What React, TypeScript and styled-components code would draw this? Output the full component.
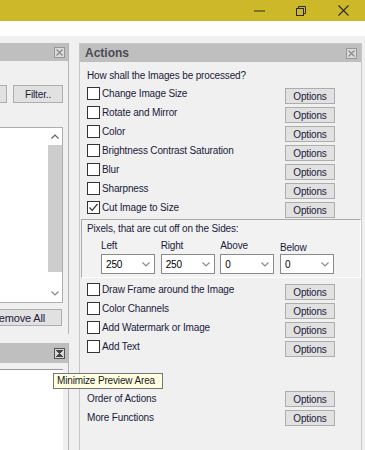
import React from 'react';
import styled, { createGlobalStyle } from 'styled-components';

const GlobalStyle = createGlobalStyle`
  html, body {
    margin: 0;
    padding: 0;
  }
  body {
    background: #f0f0f0;
    font-family: 'Liberation Sans', Arial, sans-serif;
    font-size: 10px;
    letter-spacing: -0.15px;
    color: #1a1b3a;
    overflow: hidden;
  }
`;

const Window = styled.div`
  position: relative;
  width: 365px;
  height: 450px;
  display: flex;
  flex-direction: column;
  overflow: hidden;
`;

const TitleBar = styled.div`
  height: 21px;
  flex-shrink: 0;
  display: flex;
  justify-content: flex-end;
  background: #cdb82a;
`;

const CaptionButton = styled.div<{ $w: number }>`
  width: ${({ $w }) => $w}px;
  height: 21px;
  display: flex;
  align-items: center;
  justify-content: center;
`;

const ToolStrip = styled.div`
  height: 15px;
  flex-shrink: 0;
  background: #ffffff;
`;

const Workspace = styled.div`
  flex: 1;
  display: flex;
  padding-top: 7px;
  min-height: 0;
`;

const LeftColumn = styled.div`
  width: 151px;
  margin-left: -82px;
  flex-shrink: 0;
  display: flex;
  flex-direction: column;
  gap: 9px;
`;

const DockPanel = styled.div<{ $height?: number }>`
  display: flex;
  flex-direction: column;
  border-right: 1px solid #b4b4b4;
  ${({ $height }) => ($height ? `height: ${$height}px;` : 'flex: 1;')}
  box-sizing: border-box;
`;

const PanelHeader = styled.div<{ $height: number; $padRight: number }>`
  height: ${({ $height }) => $height}px;
  flex-shrink: 0;
  display: flex;
  align-items: center;
  justify-content: space-between;
  padding: 0 ${({ $padRight }) => $padRight}px 0 5px;
  background: #bfbfbf;
`;

const PanelTitle = styled.span`
  font-size: 12px;
  font-weight: bold;
  letter-spacing: 0;
  color: #4b4b55;
`;

const LeftBody = styled.div`
  flex: 1;
  display: flex;
  flex-direction: column;
  align-items: flex-end;
  padding: 24px 5px 0 0;
`;

const ButtonRow = styled.div`
  display: flex;
  gap: 6px;
`;

const PushButton = styled.div<{ $w: number; $h?: number }>`
  width: ${({ $w }) => $w}px;
  height: ${({ $h }) => $h ?? 18}px;
  box-sizing: border-box;
  flex-shrink: 0;
  display: flex;
  align-items: center;
  justify-content: center;
  background: #e1e1e1;
  border: 1px solid #adadad;
  color: #1a1b3a;
  white-space: nowrap;
`;

const ListBox = styled.div`
  width: 140px;
  height: 176px;
  margin-top: 24px;
  box-sizing: border-box;
  display: flex;
  justify-content: flex-end;
  background: #ffffff;
  border: 1px solid #adadad;
`;

const ScrollBar = styled.div`
  width: 14px;
  display: flex;
  flex-direction: column;
  align-items: stretch;
`;

const ScrollArrow = styled.div`
  height: 17px;
  display: flex;
  align-items: center;
  justify-content: center;
`;

const ScrollThumb = styled.div`
  height: 127px;
  background: #cdcdcd;
`;

const ScrollTrack = styled.div`
  flex: 1;
`;

const RemoveButton = styled(PushButton)`
  margin-top: 6px;
  margin-right: 1px;
  font-size: 11px;
`;

const PreviewBody = styled.div`
  flex: 1;
  display: flex;
  flex-direction: column;
  align-items: flex-end;
  padding: 6px 5px 0 0;
`;

const PreviewArea = styled.div`
  width: 140px;
  flex: 1;
  background: #ffffff;
  border-top: 1px solid #9a9a9a;
`;

const ActionsPanel = styled.div`
  width: 283px;
  margin-left: 10px;
  flex-shrink: 0;
  box-sizing: border-box;
  display: flex;
  flex-direction: column;
  border: 1px solid #c8c8c8;
  border-bottom: none;
`;

const ActionsBody = styled.div`
  display: flex;
  flex-direction: column;
  padding-top: 7px;
`;

const Question = styled.div`
  height: 13px;
  line-height: 13px;
  padding-left: 7px;
  margin-bottom: 5px;
`;

const ActionRow = styled.div`
  height: 19px;
  flex-shrink: 0;
  display: flex;
  align-items: flex-start;
  padding: 0 26px 0 7px;
`;

const CheckBox = styled.div`
  width: 13px;
  height: 13px;
  box-sizing: border-box;
  flex-shrink: 0;
  display: flex;
  align-items: center;
  justify-content: center;
  background: #ffffff;
  border: 1px solid #333333;
`;

const RowLabel = styled.span<{ $plain?: boolean }>`
  line-height: 13px;
  margin-left: ${({ $plain }) => ($plain ? 0 : 2)}px;
  padding-top: ${({ $plain }) => ($plain ? 2 : 0)}px;
  white-space: nowrap;
`;

const OptionsButton = styled(PushButton)`
  margin-left: auto;
  margin-top: 1px;
`;

const CropGroup = styled.div`
  margin: -1px 0 5px 1px;
  padding: 2px 0 3px 5px;
  display: flex;
  flex-direction: column;
  border-top: 1px solid #a9a9a9;
  border-left: 1px solid #a9a9a9;
  border-bottom: 1px solid #ffffff;
  border-right: 1px solid #ffffff;
  background: #f2f2f2;
`;

const GroupCaption = styled.div`
  line-height: 13px;
`;

const SideGrid = styled.div`
  display: grid;
  grid-template-columns: repeat(4, 54px);
  column-gap: 5.67px;
  margin: 4px 0 0 14px;
`;

const SideLabel = styled.div<{ $drop?: boolean }>`
  height: 13px;
  line-height: 13px;
  transform: translateY(${({ $drop }) => ($drop ? 2 : 0)}px);
`;

const SideSelect = styled.div`
  height: 20px;
  margin-top: 2px;
  box-sizing: border-box;
  display: flex;
  align-items: center;
  justify-content: space-between;
  padding: 0 4px 0 4px;
  background: #ffffff;
  border: 1px solid #8a8a8a;
  color: #000000;
`;

const Spacer = styled.div<{ $h: number }>`
  height: ${({ $h }) => $h}px;
  flex-shrink: 0;
`;

const Tooltip = styled.div`
  position: absolute;
  left: 53px;
  top: 373px;
  width: 110px;
  height: 16px;
  box-sizing: border-box;
  padding: 0 3px;
  line-height: 14px;
  background: #ffffe1;
  border: 1px solid #767676;
  color: #1a1a1a;
  white-space: nowrap;
`;

function PanelClose({ dark }: { dark?: boolean }) {
  if (dark) {
    return (
      <svg width="11" height="11" viewBox="0 0 11 11">
        <rect x="0.5" y="0.5" width="10" height="10" fill="#d6d6d6" stroke="#555" />
        <polygon points="2,2 9,2 5.5,5.5" fill="#444" />
        <polygon points="2,9 9,9 5.5,5.5" fill="#444" />
        <path d="M2 2 L9 9 M9 2 L2 9" stroke="#444" strokeWidth="1" />
      </svg>
    );
  }
  return (
    <svg width="11" height="11" viewBox="0 0 11 11">
      <rect x="0.5" y="0.5" width="10" height="10" fill="#dcdcdc" stroke="#979797" />
      <path d="M2.5 2.5 L8.5 8.5 M8.5 2.5 L2.5 8.5" stroke="#8c8c8c" strokeWidth="1.4" />
    </svg>
  );
}

function Chevron({ up }: { up?: boolean }) {
  return (
    <svg width="8" height="5" viewBox="0 0 8 5">
      <path
        d={up ? 'M0.5 4.5 L4 1 L7.5 4.5' : 'M0.5 0.5 L4 4 L7.5 0.5'}
        fill="none"
        stroke={up ? '#606060' : '#8a8a8a'}
        strokeWidth="1.2"
      />
    </svg>
  );
}

const topActions = [
  { label: 'Change Image Size' },
  { label: 'Rotate and Mirror' },
  { label: 'Color' },
  { label: 'Brightness Contrast Saturation' },
  { label: 'Blur' },
  { label: 'Sharpness' },
  { label: 'Cut Image to Size', checked: true },
];

const bottomActions = [
  'Draw Frame around the Image',
  'Color Channels',
  'Add Watermark or Image',
  'Add Text',
];

const sides = [
  { label: 'Left', value: '250' },
  { label: 'Right', value: '250' },
  { label: 'Above', value: '0' },
  { label: 'Below', value: '0', drop: true },
];

function Action({ label, checked }: { label: string; checked?: boolean }) {
  return (
    <ActionRow>
      <CheckBox>
        {checked && (
          <svg width="11" height="11" viewBox="0 0 11 11">
            <path d="M1.5 5.5 L4.2 8.3 L9.5 2" fill="none" stroke="#333" strokeWidth="1.2" />
          </svg>
        )}
      </CheckBox>
      <RowLabel>{label}</RowLabel>
      <OptionsButton $w={50} $h={16}>Options</OptionsButton>
    </ActionRow>
  );
}

export default function App() {
  return (
    <>
      <GlobalStyle />
      <Window>
        <TitleBar>
          <CaptionButton $w={41}>
            <svg width="11" height="2" viewBox="0 0 11 2">
              <rect x="0" y="0.5" width="11" height="1" fill="#2a2a2a" />
            </svg>
          </CaptionButton>
          <CaptionButton $w={41}>
            <svg width="10" height="10" viewBox="0 0 10 10">
              <rect x="0.5" y="2.5" width="7" height="7" fill="none" stroke="#2a2a2a" />
              <path d="M2.5 2.5 V0.5 H9.5 V7.5 H7.5" fill="none" stroke="#2a2a2a" />
            </svg>
          </CaptionButton>
          <CaptionButton $w={44}>
            <svg width="11" height="11" viewBox="0 0 11 11">
              <path d="M0.5 0.5 L10.5 10.5 M10.5 0.5 L0.5 10.5" stroke="#2a2a2a" strokeWidth="1.1" />
            </svg>
          </CaptionButton>
        </TitleBar>
        <ToolStrip />
        <Workspace>
          <LeftColumn>
            <DockPanel $height={291}>
              <PanelHeader $height={18} $padRight={3}>
                <span />
                <PanelClose />
              </PanelHeader>
              <LeftBody>
                <ButtonRow>
                  {/* only the right edge of this button is on screen */}
                  <PushButton $w={90} />
                  <PushButton $w={50}>Filter..</PushButton>
                </ButtonRow>
                <ListBox>
                  <ScrollBar>
                    <ScrollArrow>
                      <Chevron up />
                    </ScrollArrow>
                    <ScrollThumb />
                    <ScrollTrack />
                    <ScrollArrow>
                      <Chevron />
                    </ScrollArrow>
                  </ScrollBar>
                </ListBox>
                <RemoveButton $w={88} $h={17}>Remove All</RemoveButton>
              </LeftBody>
            </DockPanel>
            <DockPanel>
              <PanelHeader $height={20} $padRight={3}>
                <span />
                <PanelClose dark />
              </PanelHeader>
              <PreviewBody>
                <PreviewArea />
              </PreviewBody>
            </DockPanel>
          </LeftColumn>
          <ActionsPanel>
            <PanelHeader $height={18} $padRight={4}>
              <PanelTitle>Actions</PanelTitle>
              <PanelClose />
            </PanelHeader>
            <ActionsBody>
              <Question>How shall the Images be processed?</Question>
              {topActions.map((a) => (
                <Action key={a.label} label={a.label} checked={a.checked} />
              ))}
              <CropGroup>
                <GroupCaption>Pixels, that are cut off on the Sides:</GroupCaption>
                <SideGrid>
                  {sides.map((s) => (
                    <SideLabel key={s.label} $drop={s.drop}>
                      {s.label}
                    </SideLabel>
                  ))}
                  {sides.map((s) => (
                    <SideSelect key={s.label + '-sel'}>
                      <span>{s.value}</span>
                      <Chevron />
                    </SideSelect>
                  ))}
                </SideGrid>
              </CropGroup>
              {bottomActions.map((label) => (
                <Action key={label} label={label} />
              ))}
              <Spacer $h={31} />
              <ActionRow>
                <RowLabel $plain>Order of Actions</RowLabel>
                <OptionsButton $w={50} $h={16}>Options</OptionsButton>
              </ActionRow>
              <ActionRow>
                <RowLabel $plain>More Functions</RowLabel>
                <OptionsButton $w={50} $h={16}>Options</OptionsButton>
              </ActionRow>
            </ActionsBody>
          </ActionsPanel>
        </Workspace>
        <Tooltip>Minimize Preview Area</Tooltip>
      </Window>
    </>
  );
}
